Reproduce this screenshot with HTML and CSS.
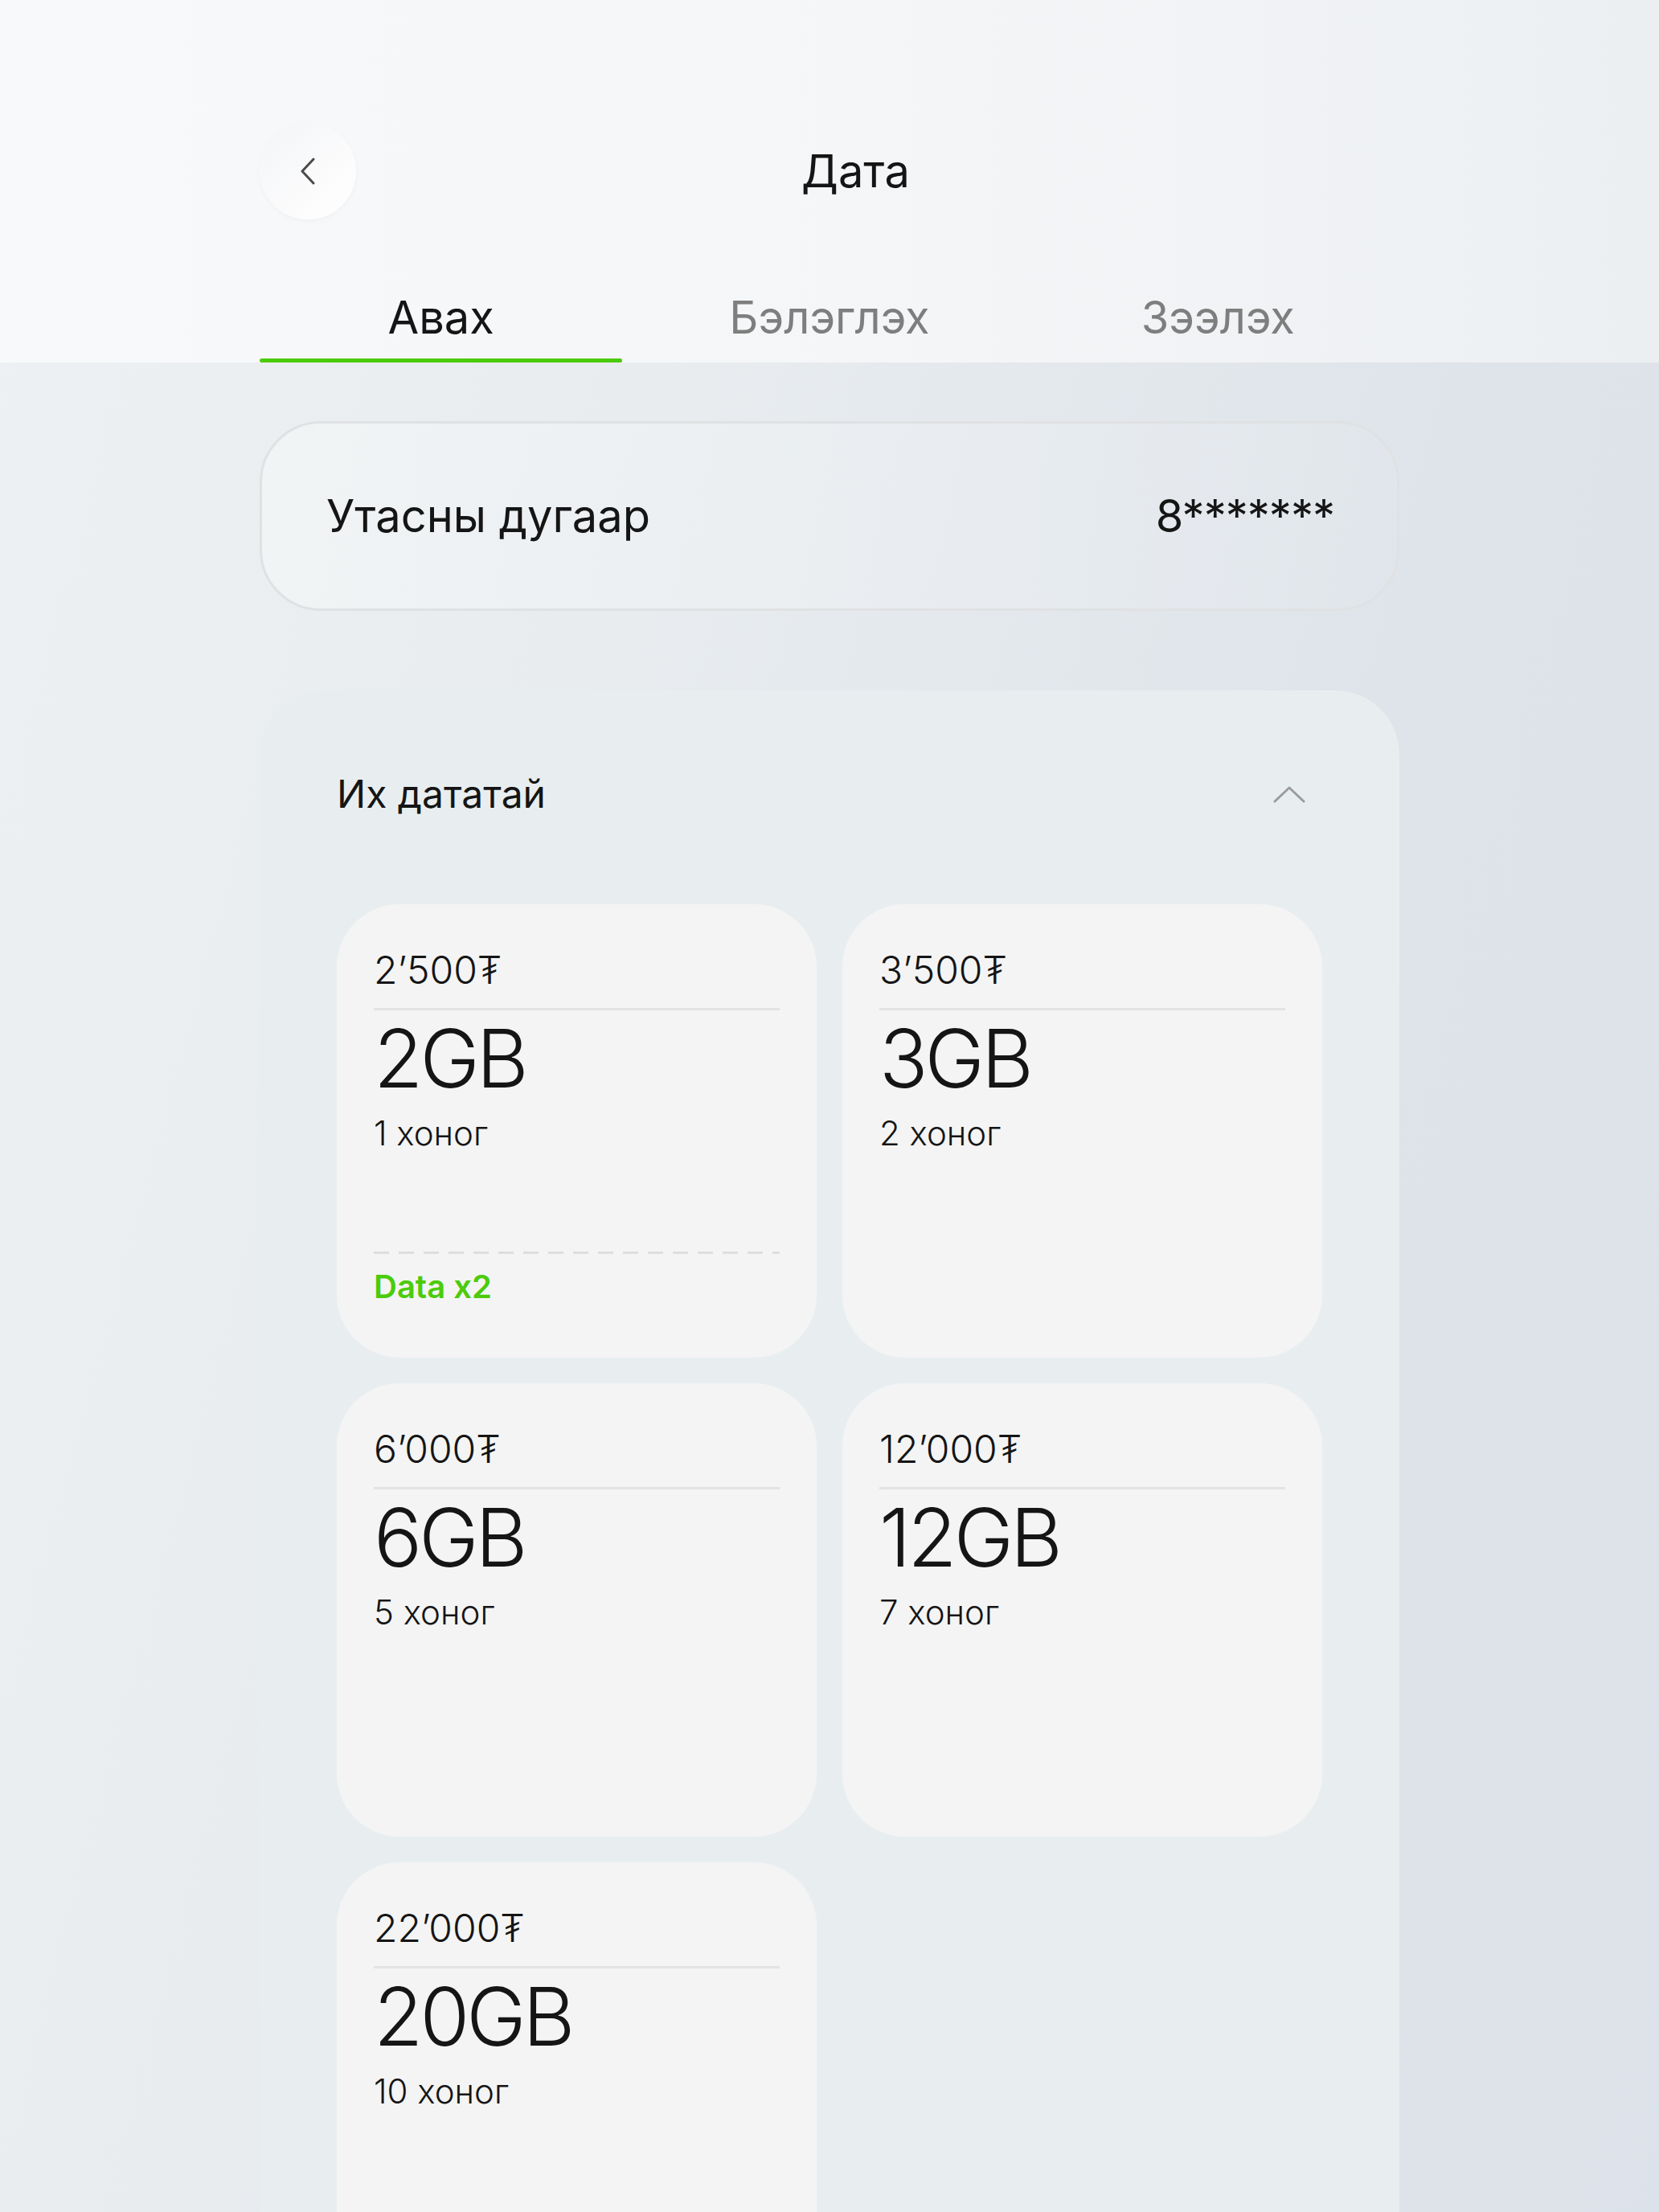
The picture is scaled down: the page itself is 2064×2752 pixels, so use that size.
FILE: index.html
```html
<!DOCTYPE html>
<html lang="mn">
<head>
    <meta charset="UTF-8">
    <meta name="viewport" content="width=device-width, initial-scale=1.0">
    <title>Дата</title>
    <link rel="stylesheet" href="styles.css">
</head>
<body>

    <header class="top-bar">
        <div class="wrap">
            <div class="title-row">
                <button class="back-btn" aria-label="Буцах">
                    <svg width="20" height="34" viewBox="0 0 20 34"><path d="M17 2 L3 17 L17 32" fill="none" stroke="#4a4a4a" stroke-width="3" stroke-linecap="round" stroke-linejoin="round"/></svg>
                </button>
                <h1 class="page-title">Дата</h1>
            </div>
            <nav class="tabs">
                <a class="tab active">Авах</a>
                <a class="tab">Бэлэглэх</a>
                <a class="tab">Зээлэх</a>
            </nav>
        </div>
    </header>

    <main class="wrap">
        <div class="phone-field">
            <span>Утасны дугаар</span>
            <span class="phone-num">8*******</span>
        </div>

        <section class="package-box">
            <div class="box-head">
                <h2>Их дататай</h2>
                <svg class="toggle" width="40" height="21" viewBox="0 0 40 21"><path d="M2 19 L20 2 L38 19" fill="none" stroke="#9b9b9b" stroke-width="3" stroke-linecap="round" stroke-linejoin="round"/></svg>
            </div>

            <div class="plans">
                <div class="plan">
                    <div class="price">2’500₮</div>
                    <div class="size">2GB</div>
                    <div class="days">1 хоног</div>
                    <div class="promo">Data x2</div>
                </div>
                <div class="plan">
                    <div class="price">3’500₮</div>
                    <div class="size">3GB</div>
                    <div class="days">2 хоног</div>
                </div>
                <div class="plan">
                    <div class="price">6’000₮</div>
                    <div class="size">6GB</div>
                    <div class="days">5 хоног</div>
                </div>
                <div class="plan">
                    <div class="price">12’000₮</div>
                    <div class="size">12GB</div>
                    <div class="days">7 хоног</div>
                </div>
                <div class="plan">
                    <div class="price">22’000₮</div>
                    <div class="size">20GB</div>
                    <div class="days">10 хоног</div>
                </div>
            </div>
        </section>
    </main>

</body>
</html>
```

FILE: styles.css
```css
body {
    margin: 0;
    height: 2752px;
    overflow: hidden;
    font-family: Inter, "Noto Sans", "DejaVu Sans", sans-serif;
    color: #151515;
    background: linear-gradient(105deg, #eef1f3 0%, #e8ecef 35%, #dfe4ea 70%, #dce2e9 100%);
}

.wrap {
    width: 1418px;
    margin: 0 auto;
}

/* header */
.top-bar {
    height: 451px;
    padding-top: 153px;
    box-sizing: border-box;
    background: linear-gradient(90deg, #f8f9fa 0%, #f5f6f8 50%, #eceff2 100%);
}

.title-row {
    display: flex;
    align-items: center;
    height: 120px;
}

.back-btn {
    width: 120px;
    height: 120px;
    border: none;
    border-radius: 50%;
    padding: 0;
    display: flex;
    align-items: center;
    justify-content: center;
    background: linear-gradient(135deg, #f3f5f7, #fbfbfc 60%, #ffffff);
    box-shadow: 0 2px 6px rgba(0, 0, 0, 0.03);
    cursor: pointer;
}

.page-title {
    margin: 0 0 0 554px;
    font-size: 56px;
    font-weight: 400;
    line-height: 68px;
}

.tabs {
    display: grid;
    grid-template-columns: repeat(3, 1fr);
    margin: 88px -16px 0;
}

.tab {
    position: relative;
    text-align: center;
    font-size: 56px;
    line-height: 68px;
    padding-bottom: 22px;
    color: #7e7e7e;
    cursor: pointer;
}

.tab.active {
    color: #151515;
}

.tab.active::after {
    content: "";
    position: absolute;
    left: 16px;
    right: 16px;
    bottom: 0;
    height: 5px;
    border-radius: 3px;
    background-color: #4ccb0a;
}

/* phone */
.phone-field {
    margin-top: 73px;
    height: 236px;
    box-sizing: border-box;
    border: 3px solid #dfe1e3;
    border-radius: 76px;
    padding: 0 78px 0 80px;
    display: flex;
    align-items: center;
    justify-content: space-between;
    font-size: 56px;
    background: linear-gradient(90deg, rgba(255, 255, 255, 0.3), rgba(255, 255, 255, 0.05));
}

.phone-num {
    letter-spacing: -1px;
}

/* packages */
.package-box {
    margin-top: 99px;
    padding: 99px 96px 200px;
    background-color: #e8eef0;
    border-radius: 80px 80px 0 0;
}

.box-head {
    display: flex;
    align-items: center;
    justify-content: space-between;
}

.box-head h2 {
    margin: 0;
    font-size: 48px;
    font-weight: 400;
    line-height: 60px;
}

.toggle {
    margin-right: 21px;
}

.plans {
    margin-top: 107px;
    display: grid;
    grid-template-columns: 1fr 1fr;
    grid-auto-rows: 564px;
    gap: 32px;
}

.plan {
    display: flex;
    flex-direction: column;
    padding: 54px 46px 64px;
    background-color: #f4f4f4;
    border-radius: 78px;
}

.price {
    font-size: 48px;
    font-weight: 350;
    line-height: 56px;
    padding-bottom: 19px;
    border-bottom: 3px solid #e3e3e3;
}

.size {
    margin-top: 5px;
    font-size: 100px;
    font-weight: 300;
    line-height: 110px;
    letter-spacing: -4px;
}

.days {
    margin-top: 13px;
    font-size: 42px;
    font-weight: 350;
    line-height: 50px;
}

.promo {
    margin-top: auto;
    padding-top: 20px;
    font-size: 40px;
    font-weight: 600;
    line-height: 48px;
    color: #4ccb0a;
    background: repeating-linear-gradient(90deg, #dedede 0 19px, transparent 19px 31px) top left / 100% 3px no-repeat;
}
```
